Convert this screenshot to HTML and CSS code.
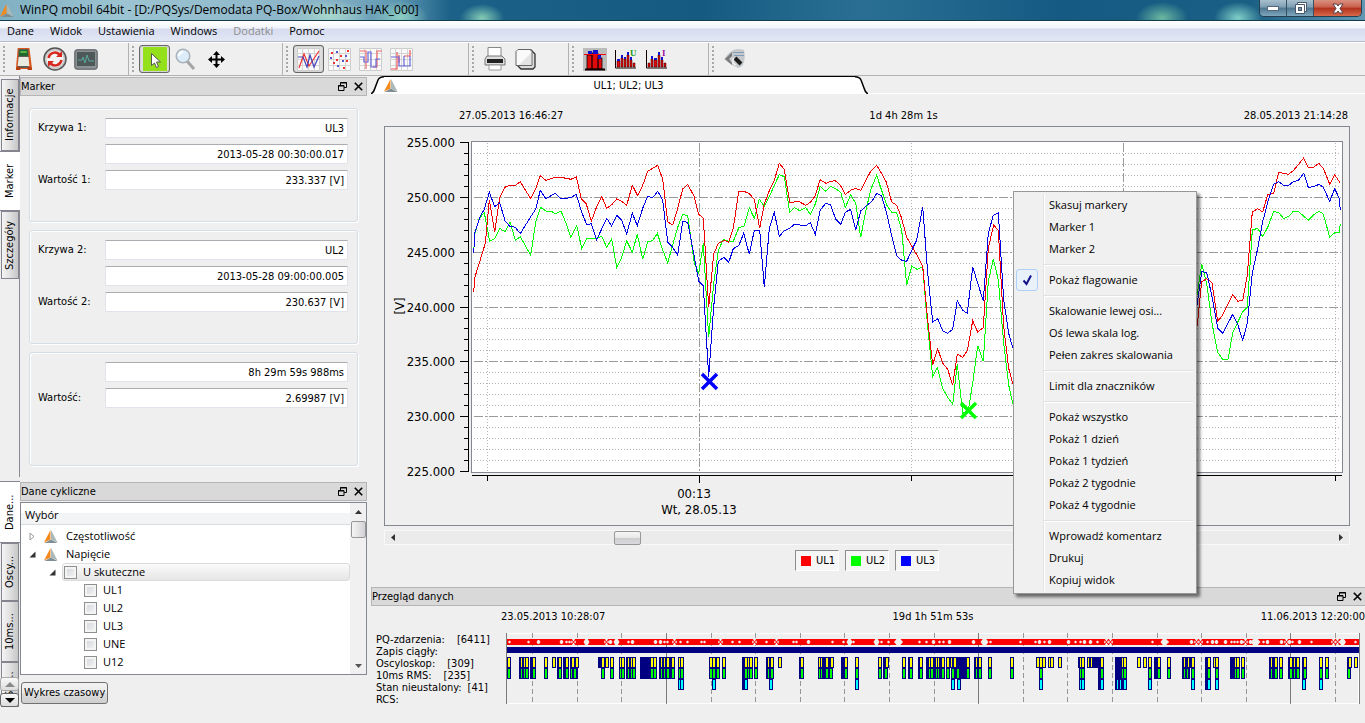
FILE: index.html
```html
<!DOCTYPE html>
<html lang="pl">
<head>
<meta charset="utf-8">
<title>WinPQ mobil 64bit</title>
<link rel="stylesheet" href="styles.css">
</head>
<body>
<svg width="0" height="0" class="defs" aria-hidden="true">
  <symbol id="logo" viewBox="0 0 14 13"><path d="M6.500 0 0 12.500l6.500-3z" fill="#f58a1c"/><path d="M7 0v9.500l6.500 3z" fill="#a9b8b8"/><path d="M.5 13 6.800 9.500l6.700 3.500z" fill="#7f8e92"/></symbol>
  <symbol id="float" viewBox="0 0 9 9"><path d="M2.500 3V.5h6v5H6M2 1h7" fill="none" stroke="#000"/><path d="M.5 3.500h5.500v5H.5zM0 4h6" fill="none" stroke="#000"/></symbol>
  <symbol id="cross" viewBox="0 0 9 9"><path d="M.8.8l7.400 7.400M8.200.8.8 8.200" stroke="#000" stroke-width="1.600"/></symbol>
  <symbol id="pad" viewBox="0 0 23 23"><path d="M.5.5h22v22H.5z" fill="#fafafa" stroke="#ccc"/><path d="M5.500 0v23M11.500 0v23M17.500 0v23M0 5.500h23M0 11.500h23M0 17.500h23" stroke="#d4d4d4"/></symbol>
</svg>

<header class="titlebar">
  <svg class="app-logo"><use href="#logo"/></svg>
  <h1>WinPQ mobil 64bit - [D:/PQSys/Demodata PQ-Box/Wohnhaus HAK_000]</h1>
  <div class="window-buttons">
    <button aria-label="Minimalizuj"><svg width="12" height="5"><rect x=".5" y=".5" width="11" height="4" fill="#fff" stroke="#55697a"/></svg></button>
    <button aria-label="Przywróć"><svg width="13" height="13"><path d="M3.500.5h9v9h-2v2h-9v-9h2z" fill="#fff" stroke="#46586a"/><path d="M3.500 2.500h7v7" fill="none" stroke="#46586a"/><rect x="4.500" y="5.500" width="3" height="3" fill="#7d93a6" stroke="#46586a"/></svg></button>
    <button class="close" aria-label="Zamknij"><svg width="12" height="11"><path d="M1 1h3.500L6 3l1.500-2H11L8 5.500 11 10H7.500L6 8l-1.500 2H1l3-4.500z" fill="#fff" stroke="#55404a"/></svg></button>
  </div>
</header>

<nav class="menubar">
  <button>Dane</button><button>Widok</button><button>Ustawienia</button><button>Windows</button><button disabled>Dodatki</button><button>Pomoc</button>
</nav>

<div class="toolbar">
  <div class="tools tools-device">
    <button aria-label="Urządzenie"><svg width="18" height="24" viewBox="2 0 20 24" preserveAspectRatio="none"><path d="M5 1h13l3 21H3z" fill="#d9561e"/><path d="M6 2h11v19H5z" fill="#5c5f55"/><path d="M7 3h9l.5 6H6.500z" fill="#20682e"/><path d="M8 4h7v2H8z" fill="#59b54a"/><path d="M6 10h11l1 9H5z" fill="#e9ebe0"/><path d="M4 20h4v3H3zM16 20h4l1 3h-5z" fill="#b53c12"/></svg></button>
    <button aria-label="Odśwież"><svg width="24" height="24"><circle cx="12" cy="12" r="11" fill="#c9c9c9" stroke="#555" stroke-width="1.500"/><circle cx="12" cy="12" r="8.500" fill="#f3f3f3"/><path d="M5.500 11a6.500 6.500 0 0 1 11-3.500M18.500 13a6.500 6.500 0 0 1-11 3.500" fill="none" stroke="#d5281f" stroke-width="2.500"/><path d="M19 4v6h-6zM5 20v-6h6z" fill="#d5281f"/></svg></button>
    <button aria-label="Podgląd"><svg width="24" height="21"><rect x=".8" y=".8" width="22.400" height="19.400" rx="2" fill="#8c9194" stroke="#4f5457"/><rect x="3" y="3" width="18" height="14" fill="#4f5859"/><path d="M4 11h4l1-3 2 6 2-8 2 6h5" fill="none" stroke="#58a79c"/></svg></button>
  </div>
  <div class="tools tools-mouse">
    <button class="pressed" aria-label="Wskaźnik"><svg width="24" height="24"><path d="M0 0h24v24H0z" fill="#93e01b"/><path d="M8.500 6.500v12l3-2.500 2 4.500 2-1-2-4.500h4z" fill="#fff" stroke="#555"/></svg></button>
    <button aria-label="Lupa"><svg width="22" height="23"><path d="m12 13 7 8" stroke="#a5a5a5" stroke-width="3"/><circle cx="8" cy="8" r="6.800" fill="#dcecf8" stroke="#a9b2ba" stroke-width="1.500"/><path d="M4 8a4 4 0 0 1 4-4" stroke="#fff" stroke-width="2" fill="none"/></svg></button>
    <button aria-label="Przesuń"><svg width="17" height="17"><path d="M8.500 2v13M2 8.500h13" stroke="#000" stroke-width="2"/><path d="M8.500 0 12 4H5zM8.500 17 5 13h7zM0 8.500 4 5v7zM17 8.500 13 12V5z"/></svg></button>
  </div>
  <div class="tools tools-chart">
    <button class="pressed" aria-label="Linie"><svg width="23" height="23"><use href="#pad"/><path d="M2 20 7 6l5 12 4-6 6-9" fill="none" stroke="#e33" stroke-width="1.200"/><path d="M1 9h5l4 10 3-12 4 12 5-11" fill="none" stroke="#44b" stroke-width="1.200"/></svg></button>
    <button aria-label="Punkty"><svg width="23" height="23"><use href="#pad"/><path d="M3 4h2v2H3zM19 2h2v2h-2zM8 11h2v2H8zM12 7h2v2h-2zM5 14h2v2H5zM15 19h2v2h-2zM18 12h2v2h-2z" fill="#e33"/><path d="M2 9h2v2H2zM8 3h2v2H8zM9 17h2v2H9zM14 12h2v2h-2zM17 7h2v2h-2z" fill="#55c"/></svg></button>
    <button aria-label="Schodki"><svg width="23" height="23"><use href="#pad"/><path d="M1 3h6v18M14 19h4V3h5" fill="none" stroke="#e66" stroke-width="1.200"/><path d="M1 9h4v5h4V4h3v15h5v-8h4" fill="none" stroke="#66d" stroke-width="1.200"/></svg></button>
    <button aria-label="Schodki i punkty"><svg width="23" height="23"><use href="#pad"/><path d="M1 21h6V4M9 7v8M14 8h6V2" fill="none" stroke="#e55" stroke-width="1.200"/><path d="M1 9h8v9h5V8h0v10h6V8" fill="none" stroke="#66d" stroke-width="1.200"/></svg></button>
  </div>
  <div class="tools tools-print">
    <button aria-label="Drukuj"><svg width="22" height="24"><path d="M4 11V.5h13V11" fill="#fff" stroke="#888"/><path d="M3 9h15l3 3v6H1v-6z" fill="#ddd" stroke="#777"/><path d="M3 12h16v4H3z" fill="#222"/><path d="M5 18h12v5H5z" fill="#fff" stroke="#999"/></svg></button>
    <button aria-label="Kopiuj"><svg width="21" height="22"><path d="M5 2h11l4 4v13l-2 2H6l-3-3z" fill="#ddd" stroke="#333" stroke-width="1.300"/><path d="M3 1.500h12l2 2v14H1v-14z" fill="#fafafa" stroke="#666"/><path d="m4 17 12-12v12z" fill="#e4e4e4"/></svg></button>
  </div>
  <div class="tools tools-bars">
    <button aria-label="Słupki"><svg width="24" height="23"><path d="M0 0h24v23H0z" fill="#bcbcbc"/><path d="M4 7h5v14H4zM9 5h6v16H9zM15 10h4v11h-4z" fill="#e00a0a" stroke="#100" stroke-width=".8"/><path d="M5 3h4v4H5zM10 2h5v4h-5zM15 6h3v5h-3z" fill="#11c"/><path d="M2 21.500h20" stroke="#100" stroke-width="2"/><path d="M1 6.500h22" stroke="#f00"/></svg></button>
    <button aria-label="Harmoniczne U"><svg width="23" height="22"><path d="M1.500 2v18H22" fill="none" stroke="#100"/><path d="M3 13h3v6H3zM7 10h2v9H7zM10 11h2v8h-2zM13 7h2v12h-2zM16 12h2v7h-2zM19 15h2v4h-2z" fill="#e00a0a" stroke="#300" stroke-width=".5"/><path d="M3 11h3v2H3zM7 7h2v3H7zM10 9h2v2h-2zM13 4h2v3h-2zM16 9h2v3h-2z" fill="#11c"/><text x="16" y="8" class="icon-letter letter-u">U</text></svg></button>
    <button aria-label="Harmoniczne I"><svg width="23" height="22"><path d="M1.500 2v18H22" fill="none" stroke="#100"/><path d="M3 15h2v4H3zM6 11h2v8H6zM9 12h3v7H9zM13 7h2v12h-2zM16 12h2v7h-2zM19 15h2v4h-2z" fill="#e00a0a" stroke="#300" stroke-width=".5"/><path d="M6 8h2v3H6zM9 10h3v2H9zM13 4h2v3h-2zM16 9h2v3h-2z" fill="#11c"/><text x="17" y="8" class="icon-letter letter-i">I</text></svg></button>
  </div>
  <div class="tools tools-setup">
    <button aria-label="Ustawienia"><svg width="22" height="22"><path d="M9 2Q14 0 20 2q2 8-1 15-2 3-5 3C9 17 4 15 0 11q4-6 9-9z" fill="#c6c9cb"/><path d="M1 11 8 4v4l-3 3 3 4v2z" fill="#77797b"/><path d="M9 4.500h11M10 7.500h10" stroke="#7f9cb8"/><path d="m11 10 6 6" stroke="#1c1c1c" stroke-width="4"/><path d="M9 10v5l3 2" fill="none" stroke="#f4f4f4" stroke-width="1.500"/></svg></button>
  </div>
</div>

<main class="workspace">
  <aside class="side-tabs">
    <div class="tab-group">
      <button class="side-tab tab-info">Informacje</button>
      <button class="side-tab tab-marker active">Marker</button>
      <button class="side-tab tab-details">Szczegóły</button>
    </div>
    <div class="tab-group lower">
      <button class="side-tab tab-data active">Dane...</button>
      <button class="side-tab tab-osc">Oscy...</button>
      <button class="side-tab tab-ms">10ms...</button>
      <button class="side-tab tab-more">Sta...</button>
      <div class="tab-scroll">
        <button aria-label="W górę" disabled><svg width="10" height="5"><path d="M0 5 5 0l5 5z" fill="#8a8a8a"/></svg></button>
        <button aria-label="W dół"><svg width="10" height="5"><path d="M0 0h10L5 5z"/></svg></button>
      </div>
    </div>
  </aside>

  <div class="docks">
    <section class="dock marker-dock">
      <div class="dock-title"><h2>Marker</h2><button aria-label="Odepnij"><svg width="9" height="9"><use href="#float"/></svg></button><button aria-label="Zamknij"><svg width="9" height="9"><use href="#cross"/></svg></button></div>
      <div class="marker-groups">
        <fieldset>
          <label for="k1">Krzywa 1:</label><input id="k1" value="UL3" readonly>
          <input aria-label="Czas 1" class="second" value="2013-05-28 00:30:00.017" readonly>
          <label for="w1">Wartość 1:</label><input id="w1" value="233.337 [V]" readonly>
        </fieldset>
        <fieldset>
          <label for="k2">Krzywa 2:</label><input id="k2" value="UL2" readonly>
          <input aria-label="Czas 2" class="second" value="2013-05-28 09:00:00.005" readonly>
          <label for="w2">Wartość 2:</label><input id="w2" value="230.637 [V]" readonly>
        </fieldset>
        <fieldset>
          <input aria-label="Różnica czasu" class="second" value="8h 29m 59s 988ms" readonly>
          <label for="w3">Wartość:</label><input id="w3" value="2.69987 [V]" readonly>
        </fieldset>
      </div>
    </section>

    <section class="dock data-dock">
      <div class="dock-title"><h2>Dane cykliczne</h2><button aria-label="Odepnij"><svg width="9" height="9"><use href="#float"/></svg></button><button aria-label="Zamknij"><svg width="9" height="9"><use href="#cross"/></svg></button></div>
      <div class="tree-box">
        <div class="tree">
          <div class="tree-head">Wybór</div>
          <ul>
            <li class="branch"><svg width="7" height="9"><path d="M1 1v7l4-3.500z" fill="#fff" stroke="#999"/></svg><svg width="14" height="13"><use href="#logo"/></svg><span>Częstotliwość</span></li>
            <li class="branch"><svg width="7" height="9"><path d="M6.500 1.500v6h-6z" fill="#333"/></svg><svg width="14" height="13"><use href="#logo"/></svg><span>Napięcie</span></li>
            <li class="sub"><svg width="7" height="9"><path d="M6.500 1.500v6h-6z" fill="#333"/></svg><label><input type="checkbox">U skuteczne</label></li>
            <li class="leaf"><label><input type="checkbox">UL1</label></li>
            <li class="leaf"><label><input type="checkbox">UL2</label></li>
            <li class="leaf"><label><input type="checkbox">UL3</label></li>
            <li class="leaf"><label><input type="checkbox">UNE</label></li>
            <li class="leaf"><label><input type="checkbox">U12</label></li>
            <li class="leaf"><input type="checkbox" aria-label="Kolejna krzywa"></li>
          </ul>
        </div>
        <div class="vscroll">
          <button aria-label="W górę"><svg width="7" height="4"><path d="M0 4 3.500 0 7 4z" fill="#333"/></svg></button>
          <div class="vthumb"></div>
          <button class="down" aria-label="W dół"><svg width="7" height="4"><path d="M0 0h7L3.500 4z" fill="#555"/></svg></button>
        </div>
      </div>
      <button class="time-button">Wykres czasowy</button>
    </section>
  </div>

  <div class="content">
    <section class="chart-view">
      <div class="chart-tabs">
        <svg class="slant" width="13" height="18"><path d="M0 18Q3 16 4 12L7 4Q8.500.5 13 .5V18z" fill="#fff"/><path d="M0 18Q3 16 4 12L7 4Q8.500.8 13 .8" fill="none" stroke="#000" stroke-width="1.500"/></svg>
        <button class="chart-tab"><svg width="14" height="13"><use href="#logo"/></svg><span>UL1; UL2; UL3</span></button>
        <svg class="slant" width="13" height="18"><path d="M13 18Q10 16 9 12L6 4Q4.500.5 0 .5V18z" fill="#fff"/><path d="M13 18Q10 16 9 12L6 4Q4.500.8 0 .8" fill="none" stroke="#000" stroke-width="1.500"/></svg>
      </div>
      <div class="range chart-range"><span>27.05.2013 16:46:27</span><span>1d 4h 28m 1s</span><span>28.05.2013 21:14:28</span></div>
      <div class="chart-frame"><svg id="chart" viewBox="385 127 964 398" role="img" aria-label="Przebieg napięć UL1, UL2, UL3"></svg></div>
      <div class="hscroll">
        <button aria-label="W lewo"><svg width="4" height="7"><path d="M4 0v7L0 3.500z" fill="#333"/></svg></button>
        <div class="htrack"><div class="hthumb"></div></div>
        <button aria-label="W prawo"><svg width="4" height="7"><path d="M0 0v7l4-3.500z" fill="#333"/></svg></button>
      </div>
      <div class="legend">
        <button><i class="swatch red"></i>UL1</button><button><i class="swatch green"></i>UL2</button><button><i class="swatch blue"></i>UL3</button>
      </div>
      <div class="context-menu" role="menu">
        <button role="menuitem">Skasuj markery</button>
        <button role="menuitem">Marker 1</button>
        <button role="menuitem">Marker 2</button>
        <hr>
        <button role="menuitemcheckbox" aria-checked="true" class="checked"><span class="check"><svg width="11" height="12"><path d="M1.500 6.500 4.500 10 9 1.500" fill="none" stroke="#12128c" stroke-width="2"/></svg></span>Pokaż flagowanie</button>
        <hr>
        <button role="menuitem">Skalowanie lewej osi...</button>
        <button role="menuitem">Oś lewa skala log.</button>
        <button role="menuitem">Pełen zakres skalowania</button>
        <hr>
        <button role="menuitem">Limit dla znaczników</button>
        <hr>
        <button role="menuitem">Pokaż wszystko</button>
        <button role="menuitem">Pokaż 1 dzień</button>
        <button role="menuitem">Pokaż 1 tydzień</button>
        <button role="menuitem">Pokaż 2 tygodnie</button>
        <button role="menuitem">Pokaż 4 tygodnie</button>
        <hr>
        <button role="menuitem">Wprowadź komentarz</button>
        <button role="menuitem">Drukuj</button>
        <button role="menuitem">Kopiuj widok</button>
      </div>
    </section>

    <section class="dock overview">
      <div class="dock-title"><h2>Przegląd danych</h2><button aria-label="Odepnij"><svg width="9" height="9"><use href="#float"/></svg></button><button aria-label="Zamknij"><svg width="9" height="9"><use href="#cross"/></svg></button></div>
      <div class="range overview-range"><span>23.05.2013 10:28:07</span><span>19d 1h 51m 53s</span><span>11.06.2013 12:20:00</span></div>
      <div class="overview-body">
        <ul class="counts">
          <li><span>PQ-zdarzenia:</span><span class="n-wide">[6411]</span></li>
          <li><span>Zapis ciągły:</span></li>
          <li><span>Oscyloskop:</span><span class="n-wide">[309]</span></li>
          <li><span>10ms RMS:</span><span class="n-wide">[235]</span></li>
          <li><span>Stan nieustalony:</span><span class="n-near">[41]</span></li>
          <li><span>RCS:</span></li>
        </ul>
        <svg id="overview" viewBox="506 632 854 73" role="img" aria-label="Przegląd zdarzeń"></svg>
      </div>
    </section>
  </div>
</main>
<script src="app.js"></script>
</body>
</html>
```
FILE: styles.css
```css
* { box-sizing: border-box; }
body {
  margin: 0;
  min-height: 100vh;
  background: #efefef;
  color: #000;
  font: 11px/14px "DejaVu Sans Condensed", "Noto Sans", sans-serif;
  overflow: hidden;
}
button, input { font: inherit; color: inherit; margin: 0; }
button { border: 0; background: none; padding: 0; }
h1, h2 { margin: 0; font: inherit; }
ul { margin: 0; padding: 0; list-style: none; }
svg { display: block; flex: none; }
.defs { position: absolute; }

/* title bar */
.titlebar {
  display: flex;
  height: 21px;
  align-items: center;
  background:
    radial-gradient(ellipse 26px 16px at 1162px 18px, #6cb8a0, transparent),
    radial-gradient(ellipse 24px 16px at 1238px 18px, #7fd0c8, transparent),
    radial-gradient(ellipse 22px 14px at 482px 18px, #84ccb4, transparent),
    radial-gradient(ellipse 28px 16px at 400px 17px, #8ed0c4, transparent),
    radial-gradient(ellipse 40px 16px at 330px 16px, #a8d8cc, transparent),
    linear-gradient(90deg, #7fb0c2, #9cc4d2 120px, #8ab4c8 320px, #5c96b0 400px, #1c6188 450px, #155a80 700px, #2a6f93 860px, #155a82 1060px, #1a5f84 1250px, #6398b4);
  border-bottom: 1px solid #123c50;
  font: 12px/16px "Open Sans", sans-serif;
}
.app-logo { width: 14px; height: 13px; margin-right: 6px; }
.titlebar h1 { flex: 1; }
.window-buttons {
  display: flex;
  align-self: flex-start;
  margin-right: 3px;
  border: 1px solid #243f50;
  border-top: 0;
  border-radius: 0 0 5px 5px;
  overflow: hidden;
}
.window-buttons button {
  display: grid;
  place-items: center;
  width: 27px;
  height: 16px;
  border-right: 1px solid #35505f;
  background: linear-gradient(#a9c0ce, #7d9db2 45%, #4f7690 50%, #7ea7bd);
}
.window-buttons .close { width: 47px; border: 0; background: linear-gradient(#d9917f, #c85f4b 45%, #b0301c 50%, #d8694a); }

/* menus and toolbars */
.menubar {
  display: flex;
  height: 21px;
  background: linear-gradient(#fff, #f1f4fa 7px, #d6dcee 8px, #e3e8f6);
  border-bottom: 1px solid #b4b9c6;
  font: 11px/18px "Open Sans", sans-serif;
}
.menubar button { padding: 0 8px; }
.menubar button:first-child { padding-left: 7px; }
.menubar button:disabled { color: #8b8b8b; }
.toolbar { display: flex; height: 34px; border-bottom: 1px solid #b2b2b2; border-top: 1px solid #fff; }
.tools { display: flex; align-items: center; padding-left: 10px; border-right: 1px solid #b2b2b2; position: relative; }
.tools::before {
  content: "";
  position: absolute;
  left: 3px;
  top: 3px;
  bottom: 3px;
  width: 2px;
  background: repeating-linear-gradient(#a8a8a8 0 2px, transparent 2px 4px);
}
.tools button { display: grid; place-items: center; width: 31px; height: 28px; }
.tools .pressed { border: 1px solid #666; border-radius: 3px; background: #dedede; box-shadow: inset 0 0 1px #777; }
.tools-device { width: 129px; padding-left: 8px; }
.tools-mouse { width: 154px; }
.tools-chart { width: 186px; }
.tools-print { width: 100px; }
.tools-bars { width: 140px; }
.tools-setup { flex: 1; border-right: 0; }
.icon-letter { font: bold 9px "Liberation Serif", serif; }
.letter-u { fill: #1a9a1a; }
.letter-i { fill: #a012a0; }

/* workspace */
.workspace { display: grid; grid-template-columns: 20px 347px minmax(0, 1fr); align-items: start; }
.side-tabs { display: flex; flex-direction: column; }
.tab-group { display: flex; flex-direction: column; height: 401px; padding-top: 3px; border-right: 1px solid #8a8a94; }
.tab-group.lower { height: auto; margin-top: 4px; padding-top: 0; position: relative; border: 0; }
.side-tab {
  width: 18px;
  margin-left: 1px;
  writing-mode: vertical-rl;
  transform: rotate(180deg);
  border: 1px solid #85858f;
  background: linear-gradient(270deg, #f4f4f4, #e0e0e0 50%, #c6c6c6);
  text-align: center;
}
.side-tab.active { width: 20px; margin-left: 0; background: #fff; border-width: 1px 0; }
.tab-info { height: 72px; }
.tab-marker { height: 60px; }
.tab-details { height: 68px; }
.tab-data { height: 62px; }
.tab-osc { height: 58px; }
.tab-ms { height: 61px; }
.tab-more { height: 45px; }
.tab-scroll { position: absolute; left: 0; bottom: 0; display: grid; gap: 2px; }
.tab-scroll button {
  display: grid;
  place-items: center;
  width: 19px;
  height: 14px;
  border: 1px solid #666;
  border-radius: 3px;
  background: linear-gradient(#f8f8f8, #ddd);
}
.tab-scroll button:disabled { border-color: #aaa; }

.dock-title {
  display: flex;
  align-items: center;
  height: 19px;
  border: 1px solid #b5b5b5;
  background: #d9d9d9;
}
.dock-title h2 { flex: 1; }
.dock-title button { width: 16px; display: grid; place-items: center; }
.docks { padding-top: 1px; }
.marker-dock { min-height: 405px; }
.marker-groups { display: grid; gap: 8px; padding: 12px 9px 0; }
fieldset {
  display: grid;
  grid-template-columns: 67px 1fr;
  grid-auto-rows: 20px;
  row-gap: 6px;
  min-height: 114px;
  margin: 0;
  padding: 9px 9px 0 8px;
  border: 1px solid #d5dde5;
  border-radius: 3px;
  box-shadow: inset 1px 1px #fff, 1px 1px #fff;
}
fieldset label { line-height: 20px; }
fieldset input {
  width: 100%;
  padding: 1px 3px 0;
  border: 1px solid #e2e3ea;
  border-top-color: #abadb3;
  border-radius: 1px;
  background: #fff;
  text-align: right;
}
fieldset .second { grid-column: 2; }

.tree-box { display: flex; height: 173px; margin-top: 1px; border: 1px solid #828790; background: #fff; }
.tree { flex: 1; overflow: hidden; font: 11px/18px "Open Sans", sans-serif; }
.tree-head { height: 22px; padding: 3px 4px; border-bottom: 1px solid #d8dde2; background: linear-gradient(#fff 45%, #f3f4f5 50%); margin-bottom: 2px; }
.tree li { display: flex; align-items: center; height: 18px; }
.branch { gap: 8px; padding-left: 8px; }
.sub { gap: 6px; padding-left: 28px; }
.sub label { flex: 1; border: 1px solid #dcdcdc; border-radius: 3px; background: linear-gradient(#fafafa, #e6e6e6); padding-left: 1px; height: 18px; }
.tree label { display: flex; align-items: center; gap: 6px; }
.tree input {
  appearance: none;
  flex: none;
  width: 13px;
  height: 13px;
  border: 1px solid #8e8f8f;
  background: linear-gradient(135deg, #cfd3d9, #f6f6f6);
  box-shadow: inset 0 0 0 2px #f4f4f4;
}
.leaf { padding-left: 63px; }
.vscroll { display: flex; flex-direction: column; align-items: center; width: 16px; background: #f0f0f0; }
.vscroll button { height: 17px; }
.vscroll .down { margin-top: auto; }
.vthumb { width: 15px; height: 17px; margin-top: 1px; border: 1px solid #979797; border-radius: 2px; background: linear-gradient(90deg, #f5f5f5, #d2d2d6); }
.time-button {
  height: 22px;
  margin: 7px 0 0 1px;
  padding: 0 2px;
  border: 1px solid #707070;
  border-radius: 3px;
  background: linear-gradient(#f2f2f2, #ebebeb 50%, #ddd 50%, #cfcfcf);
}

/* chart */
.content { padding-left: 4px; }
.chart-view { position: relative; height: 511px; }
.chart-tabs { display: flex; height: 18px; background: linear-gradient(#fff, #fff) bottom / 100% 1px no-repeat; }
.chart-tab {
  display: flex;
  align-items: center;
  width: 471px;
  height: 18px;
  background: #fff;
  border-top: 1px solid #000;
}
.chart-tab span { flex: 1; padding-left: 4px; }
.range { display: grid; grid-template-columns: 1fr auto 1fr; }
.range span:last-child { text-align: right; }
.chart-range { padding: 15px 17px 0 88px; }
.chart-frame { margin: 3px 15px 0 13px; border: 1px solid #828790; }
#chart { width: 100%; height: auto; }
.axis-text { font-size: 13px; }
.hscroll { display: flex; align-items: center; height: 15px; margin: 4px 15px 0 13px; padding: 0 6px; background: #ebebeb; border: 1px solid #f8f8f8; }
.htrack { flex: 1; padding-left: 23%; }
.hthumb { width: 27px; height: 14px; border: 1px solid #979797; border-radius: 2px; background: linear-gradient(#f5f5f5, #e8e8e8 50%, #cdcdd0 50%, #dadade); }
.legend { display: flex; justify-content: center; gap: 6px; margin-top: 5px; padding-right: 2px; }
.legend button {
  display: flex;
  align-items: center;
  gap: 5px;
  width: 44px;
  height: 21px;
  padding-left: 5px;
  border: 1px solid #8d8d8d;
  border-right-color: #fff;
  border-bottom-color: #fff;
  background: #f6f6f6;
}
.swatch { width: 10px; height: 10px; }
.red { background: #f00; }
.green { background: #0f0; }
.blue { background: #00f; }

.context-menu {
  position: absolute;
  left: 642px;
  top: 115px;
  z-index: 2;
  width: 184px;
  padding: 2px;
  border: 1px solid #979797;
  background: linear-gradient(90deg, #f0f0f0 27px, #e2e3e3 27px 28px, #fff 28px 29px, #f0f0f0 29px) content-box, #f0f0f0;
  box-shadow: 3px 3px 3px #0008;
  font: 11px/20px "Open Sans", sans-serif;
}
.context-menu button { display: block; position: relative; width: 100%; height: 22px; padding-left: 33px; text-align: left; }
.context-menu hr { height: 2px; margin: 4px 1px 3px 28px; border: 0; border-top: 1px solid #e0e0e0; border-bottom: 1px solid #fff; }
.check { position: absolute; left: 0; top: 0; display: grid; place-items: center; width: 22px; height: 22px; border: 1px solid #aecff7; border-radius: 3px; background: #e9f1fa; }

/* overview */
.overview .dock-title { border-right: 0; }
.overview-range { padding: 4px 0 0 130px; }
.overview-body { display: grid; grid-template-columns: 130px minmax(0, 1fr); padding: 8px 5px 0 5px; }
.counts { line-height: 12px; padding-top: 2px; }
.counts li { display: flex; height: 12px; }
.n-wide { margin-left: 12px; }
.n-near { margin-left: 6px; }
#overview { width: 100%; height: auto; }
```
FILE: app.js
```js
const NS = 'http://www.w3.org/2000/svg';
function add(parent, tag, attrs, text) {
  const el = document.createElementNS(NS, tag);
  for (const k in attrs) el.setAttribute(k, attrs[k]);
  if (text) el.textContent = text;
  parent.appendChild(el);
  return el;
}
const path = (svg, d, stroke, width, extra) =>
  add(svg, 'path', Object.assign({ d, stroke, 'stroke-width': width || 1, fill: 'none', 'shape-rendering': 'crispEdges' }, extra));

/* voltage chart */
const chart = document.getElementById('chart');
add(chart, 'rect', { x: 471.5, y: 141.5, width: 871, height: 331, fill: '#fff', stroke: '#828790', 'shape-rendering': 'crispEdges' });
for (let v = 225; v <= 255; v++) {
  const y = Math.round(142 + (255 - v) * 10.97) + 0.5;
  const major = v % 5 === 0;
  path(chart, `M${major ? 460 : 464} ${y}H468`, '#000');
  if (v > 225 && v < 255) {
    path(chart, `M474 ${y}H1341`, major ? '#9a9a9a' : '#b4b4b4', 1, { 'stroke-dasharray': major ? '9 2 2 2' : '1 2' });
  }
  if (major) add(chart, 'text', { x: 455, y: y + 4, 'text-anchor': 'end', class: 'axis-text' }, v + '.000');
}
path(chart, 'M468.5 142V472', '#000');
path(chart, 'M472 475.5H1342', '#000');
[487, 699, 911, 1123, 1335].forEach((x, i) => {
  const major = i % 2 === 1;
  path(chart, `M${x + 0.5} 143V472`, major ? '#9a9a9a' : '#b4b4b4', 1, { 'stroke-dasharray': major ? '9 2 2 2' : '1 2' });
  path(chart, `M${x + 0.5} 476V${major ? 483 : 481}`, '#000');
});
add(chart, 'text', { x: 694, y: 498, 'text-anchor': 'middle', class: 'axis-text' }, '00:13');
add(chart, 'text', { x: 699, y: 514, 'text-anchor': 'middle', class: 'axis-text' }, 'Wt, 28.05.13');
add(chart, 'text', { transform: 'translate(404 306) rotate(-90)', 'text-anchor': 'middle', class: 'axis-text' }, '[V]');

/* samples: [origin x, points in thirds of a unit] */
const series = {
  '#00ff00': [
    [380, '281,395 285,340 298,295 313,278 329,364 344,356 359,325 375,335 390,305 406,361 421,350 452,406 467,307 482,262 497,273 512,273 526,281 543,273 558,310 572,352 590,316 605,385 620,355 650,356 665,348 680,382 695,357 710,442 725,412 740,362 757,397 772,343 788,418 803,365 818,362 832,340 848,390 863,428 893,322 908,283 923,287'],
    [690, '13,430 26,460 40,370 56,652 71,490 85,392 100,358 116,364 130,364 146,323 162,319 178,263 193,295 208,238 223,259 238,230 253,196 268,164 283,170 299,277 313,263 329,272 347,263 361,283 376,252 391,199 407,214 422,199 437,206 452,217 466,263 482,224 497,250 512,352 528,270 543,207 560,166 575,212 590,255 605,277 620,278 635,330 650,496 665,438 681,448 698,440 713,620 728,770 742,743 758,805 773,832 788,853 802,732 818,880 835,870 848,790 863,677 880,724 895,485 910,416 925,480 941,670 956,795 968,850'],
    [1000, '540,850 592,520 605,433 620,490 636,610 653,697 668,718 684,718 698,638 713,607 728,575 742,562 757,330 773,325 788,350 803,322 821,274 836,278 851,296 866,289 880,274 895,274 925,301 941,284 957,274 970,282 989,352 1004,338 1018,337 1021,312']],
  '#f00000': [
    [380, '281,515 285,470 300,422 316,370 328,240 344,335 359,232 374,202 390,196 406,196 421,185 452,236 467,207 481,167 497,181 525,172 543,172 573,178 589,170 604,237 619,252 634,304 650,260 665,229 680,265 695,254 710,237 725,244 740,256 757,196 773,227 788,196 803,154 833,136 848,178 863,306 878,315 893,265 908,207 923,193'],
    [690, '13,230 26,283 40,294 56,562 71,402 85,370 102,361 116,367 130,325 146,214 162,214 178,221 193,238 209,325 223,252 238,212 253,181 268,130 283,148 299,247 328,245 347,256 361,247 376,227 390,179 408,190 422,184 436,182 450,194 466,223 482,211 496,205 512,211 528,180 543,152 560,136 575,161 589,186 605,246 620,256 634,292 650,352 665,378 682,407 698,438 713,600 728,734 743,686 758,730 773,748 788,796 802,702 818,712 832,692 848,602 863,636 880,623 895,385 911,314 925,332 941,620 956,745 968,790'],
    [1000, '560,790 592,614 605,485 620,476 636,488 653,604 668,585 698,523 713,544 728,541 742,465 757,276 773,266 788,276 803,224 821,220 836,157 866,163 880,152 911,114 925,142 941,142 956,130 970,145 989,193 1004,164 1020,188']],
  '#0000e6': [
    [380, '281,398 285,335 300,290 313,268 328,217 344,260 359,248 375,302 389,319 406,322 421,341 452,290 467,268 481,211 497,236 526,220 543,236 573,233 589,223 605,277 620,314 634,311 650,359 680,295 695,318 710,286 725,301 740,341 757,280 772,317 788,265 803,229 818,233 833,214 848,240 863,367 878,382 893,406 908,304 923,307'],
    [690, '11,400 26,484 40,498 56,770 71,560 85,424 102,412 116,427 130,386 146,377 161,340 178,403 193,331 209,331 223,502 238,325 253,277 268,349 283,332 299,325 313,313 347,317 361,308 376,343 391,270 407,250 422,255 437,298 452,313 466,277 482,268 497,331 512,273 528,258 545,245 560,220 575,228 590,280 605,347 620,407 635,421 650,424 665,391 680,360 698,260 713,460 728,606 743,596 758,632 773,640 788,628 802,542 818,571 832,580 848,440 863,490 880,542 895,340 910,286 925,278 941,540 956,640 968,683'],
    [1000, '570,683 592,550 605,455 620,457 636,530 653,625 668,640 698,583 713,613 728,661 742,610 757,460 773,385 788,305 803,247 821,193 836,185 851,196 866,196 880,185 895,181 911,160 925,202 941,200 957,193 970,202 989,244 1004,206 1018,235 1021,270']]
};
for (const color in series) {
  const pts = series[color].flatMap(([ox, s]) => s.split(' ').map(p => {
    const [x, y] = p.split(',').map(Number);
    return (ox + x / 3).toFixed(1) + ',' + (120 + y / 3).toFixed(1);
  }));
  path(chart, 'M' + pts.join('L'), color, 1);
}
path(chart, 'M702 374l15 15M717 374l-15 15', '#00f', 3.5, { 'shape-rendering': 'auto' });
path(chart, 'M961 403l15 15M976 403l-15 15', '#0f0', 3.5, { 'shape-rendering': 'auto' });

/* overview strip */
const ov = document.getElementById('overview');
const rect = (x, y, w, h, fill) => add(ov, 'rect', { x, y, width: w, height: h, fill, 'shape-rendering': 'crispEdges' });
path(ov, 'M508 633.5H1358.5V703.5H508', '#fff');
[532, 577, 621, 711, 755, 800, 844, 889, 934, 1023, 1067, 1112, 1157, 1201, 1246, 1335]
  .forEach(x => path(ov, `M${x + 0.5} 633V703`, '#979797', 1, { 'stroke-dasharray': '5 3' }));
[506, 666, 978, 1290, 1359].forEach(x => path(ov, `M${x + 0.5} 633V704`, '#7c7c7c'));
rect(507, 639, 852, 6, '#f00');
rect(507, 647, 852, 6, '#000080');

/* pauses between events: [centre, width] */
const pauses = [509,2, 528,2, 538,3, 561,3, 566,2, 569,2, 573,4, 586,5, 606,4, 610,3, 616,5, 628,2, 632,3, 655,3, 660,3, 664,2, 667,2, 674,4, 680,2, 687,2, 701,2, 704,2,
  720,4, 732,2, 739,2, 754,4, 766,2, 776,4, 793,2, 796,2, 808,3, 832,2, 843,2, 849,5, 853,2, 876,5, 881,2, 888,2, 898,8, 919,2, 926,2, 933,3, 939,2, 943,2, 949,3, 973,3, 984,7, 990,2, 1020,2,
  1035,2, 1039,3, 1044,2, 1049,3, 1068,3, 1075,2, 1080,2, 1084,3, 1090,3, 1097,2, 1106,4, 1110,4, 1152,2, 1164,7, 1167,2, 1191,3, 1196,4, 1200,4, 1207,2, 1212,3, 1216,3, 1225,3, 1231,2, 1234,2, 1237,2, 1241,3, 1245,4, 1250,3, 1255,9, 1263,2, 1267,3, 1281,3, 1286,4, 1289,3, 1292,2, 1299,3, 1311,2, 1333,4, 1337,4, 1342,6, 1355,2];
for (let i = 0; i < pauses.length; i += 2) {
  const c = pauses[i] + 0.5, w = pauses[i + 1], h = w > 3 ? 3 : w > 2 ? 2 : 1.2;
  add(ov, 'path', { d: `M${c - w / 2 - 0.5} 642L${c - w / 4} ${642 - h}H${c + w / 4}L${c + w / 2 + 0.5} 642L${c + w / 4} ${642 + h}H${c - w / 4}z`, fill: '#efefef' });
  if (w === 4) path(ov, `M${c - 2} 639.500l4 5M${c + 2} 639.500l-4 5`, '#f00', 1, { 'shape-rendering': 'auto' });
}

/* blocks: "left-right:fills" with f for a wide fill, n for a narrow one */
const rows = [
  [657, '#ffff00', '507-511:f508 519-529:n521,n524,f526 530-536:f533 544-548:f545 552-556:f553 557-562:f559 563-569:f566 570-575:f572 575-579:f576 598-605:f602 605-609:f606 610-614:f611 619-625:n620,f622 626-636:n628,n631,f633 640-657:f651,f654 659-675:n661,n664,f667,f672 678-684:n679,f681 709-720:f710,f713,f717 722-726:f723 742-753:f745,n748,f750 754-758:f755 766-774:n768,f771 778-782:f779 799-804:f801 818-834:n819,n821,f826,f831 841-848:f845 855-859:f856 878-882:f879 883-889:f886 902-906:f903 908-913:f910 918-923:f920 926-945:n929,f931,n936,n938,f942 946-970:f947,n951,f954,f967 974-982:n976,f979 988-992:f989 1010-1014:f1011 1036-1046:f1037,f1040,f1043 1048-1054:n1049,f1051 1058-1062:f1059 1078-1085:n1080,f1082 1087-1104:n1088,n1091,f1101 1115-1127:n1122,f1124 1137-1141:f1138 1143-1147:f1144 1148-1152:f1149 1154-1161:f1158 1167-1171:f1168 1182-1195:n1184,n1188,f1192 1205-1211:f1208 1213-1219:n1214,f1216 1230-1240:n1235,f1237 1241-1245:f1242 1269-1278:n1271,f1275 1279-1283:f1280 1288-1300:f1290,n1294,f1297 1302-1307:f1304 1319-1323:f1320 1325-1329:f1326 1347-1352:f1349 1354-1358:f1355'],
  [668, '#00ff00', '507-511:f508 519-529:n521,n524,f526 530-536:f533 544-548:f545 557-562:f559 563-569:f566 570-578:n571,f574 601-605:f602 610-614:f611 619-625:n620,f622 626-636:n628,n631,f633 640-657:f651,f654 659-675:n661,n664,f667,f672 678-684:n679,f681 709-720:f710,f713,f717 722-726:f723 742-753:f745,n748,f750 754-758:f755 766-774:n768,f771 799-804:f801 818-833:n819,n821,f826,f830 841-848:f845 855-859:f856 878-882:f879 883-888:f885 902-906:f903 908-913:f910 918-923:f920 926-945:n929,f931,n936,n938,f942 946-950:f947 951-970:f952,f957,f967 974-982:n976,f979 988-992:f989 1010-1014:f1011 1039-1043:f1040 1079-1085:n1080,f1082 1098-1104:f1101 1115-1127:n1122,f1124 1148-1152:f1149 1154-1161:f1158 1167-1171:f1168 1182-1190:n1184,n1187 1191-1195:f1192 1205-1211:f1208 1215-1219:f1216 1230-1240:n1235,f1237 1241-1245:f1242 1269-1278:n1271,f1275 1279-1283:f1280 1288-1300:f1290,n1294,f1297 1302-1307:f1304 1319-1323:f1320 1325-1329:f1326 1347-1351:f1348'],
  [679, '#00ffff', '678-684:n679,f681 712-716:f713 742-748:f745 769-773:f770 855-859:f856 951-955:f952 957-961:f958 1039-1043:f1040 1079-1085:n1080,f1082 1098-1104:f1101 1115-1127:n1117,n1120,f1124 1148-1152:f1149 1191-1195:f1192 1205-1211:f1208 1215-1219:f1216 1302-1306:f1303 1319-1323:f1320']
];
rows.forEach(([y, color, spec]) => spec.split(' ').forEach(block => {
  const [span, fills] = block.split(':');
  const [a, b] = span.split('-').map(Number);
  rect(a, y, b - a, 11, '#000080');
  fills.split(',').forEach(f => rect(+f.slice(1), y + 1, f[0] === 'f' ? 2 : 1, 9, color));
}));
```
